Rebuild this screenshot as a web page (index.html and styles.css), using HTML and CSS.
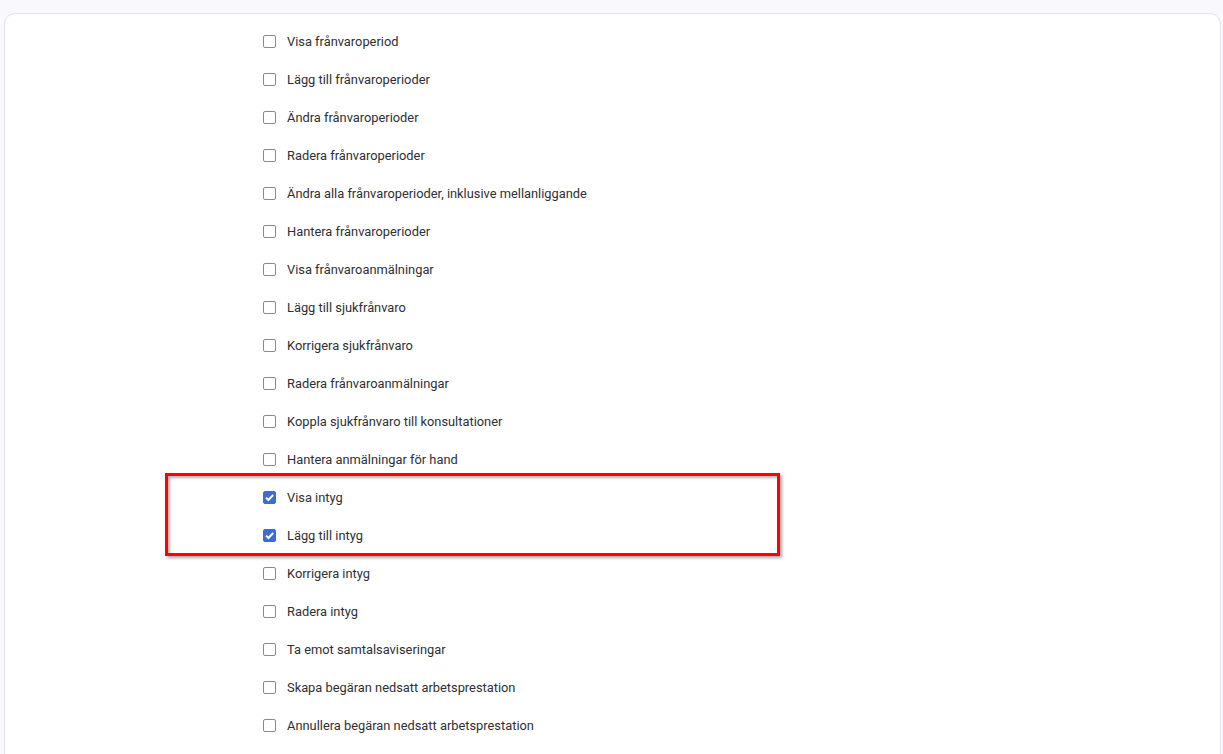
FILE: index.html
```html
<!DOCTYPE html>
<html lang="sv">
<head>
<meta charset="utf-8">
<title>Behörigheter</title>
<link rel="stylesheet" href="styles.css">
</head>
<body>
<div class="card">
  <ul class="perm-list">
    <li class="row"><span class="cb"></span><span class="label">Visa frånvaroperiod</span></li>
    <li class="row"><span class="cb"></span><span class="label">Lägg till frånvaroperioder</span></li>
    <li class="row"><span class="cb"></span><span class="label">Ändra frånvaroperioder</span></li>
    <li class="row"><span class="cb"></span><span class="label">Radera frånvaroperioder</span></li>
    <li class="row"><span class="cb"></span><span class="label">Ändra alla frånvaroperioder, inklusive mellanliggande</span></li>
    <li class="row"><span class="cb"></span><span class="label">Hantera frånvaroperioder</span></li>
    <li class="row"><span class="cb"></span><span class="label">Visa frånvaroanmälningar</span></li>
    <li class="row"><span class="cb"></span><span class="label">Lägg till sjukfrånvaro</span></li>
    <li class="row"><span class="cb"></span><span class="label">Korrigera sjukfrånvaro</span></li>
    <li class="row"><span class="cb"></span><span class="label">Radera frånvaroanmälningar</span></li>
    <li class="row"><span class="cb"></span><span class="label">Koppla sjukfrånvaro till konsultationer</span></li>
    <li class="row"><span class="cb"></span><span class="label">Hantera anmälningar för hand</span></li>
    <li class="highlight-group">
      <ul class="perm-list inner">
        <li class="row"><span class="cb checked"><svg viewBox="0 0 13 13" width="13" height="13"><path d="M3 6.6 L5.4 9 L10.2 4" fill="none" stroke="#fff" stroke-width="2"/></svg></span><span class="label">Visa intyg</span></li>
        <li class="row"><span class="cb checked"><svg viewBox="0 0 13 13" width="13" height="13"><path d="M3 6.6 L5.4 9 L10.2 4" fill="none" stroke="#fff" stroke-width="2"/></svg></span><span class="label">Lägg till intyg</span></li>
      </ul>
      <div class="highlight-box"></div>
    </li>
    <li class="row"><span class="cb"></span><span class="label">Korrigera intyg</span></li>
    <li class="row"><span class="cb"></span><span class="label">Radera intyg</span></li>
    <li class="row"><span class="cb"></span><span class="label">Ta emot samtalsaviseringar</span></li>
    <li class="row"><span class="cb"></span><span class="label">Skapa begäran nedsatt arbetsprestation</span></li>
    <li class="row"><span class="cb"></span><span class="label">Annullera begäran nedsatt arbetsprestation</span></li>
  </ul>
</div>
</body>
</html>
```
FILE: styles.css
```css
html, body {
  margin: 0;
  padding: 0;
}
body {
  background: #f9f8fc;
  font-family: Roboto, "Liberation Sans", Arial, sans-serif;
  color: #2e2e33;
  height: 754px;
  overflow: hidden;
}
.card {
  margin: 13px 2px 0 4px;
  background: #ffffff;
  border: 1px solid #e4e1ee;
  border-radius: 11px;
  padding: 8px 0 40px 258px;
}
.perm-list {
  list-style: none;
  margin: 0;
  padding: 0;
}
.row {
  box-sizing: border-box;
  height: 38px;
  padding-top: 1px;
  display: flex;
  align-items: center;
  gap: 11px;
}
.cb {
  box-sizing: border-box;
  width: 13px;
  height: 13px;
  border: 1px solid #8a8a8a;
  border-radius: 2px;
  background: #fff;
  flex: none;
  display: flex;
}
.cb.checked {
  background: #3e6ad8;
  border-color: #3e6ad8;
}
.cb.checked svg {
  margin: -1px;
}
.label {
  font-size: 12.85px;
  line-height: 15px;
}
.highlight-group {
  position: relative;
}
.highlight-box {
  position: absolute;
  left: -98px;
  top: -5px;
  width: 615px;
  height: 83px;
  box-sizing: border-box;
  border: 3px solid #ff0000;
  box-shadow: 2px 2px 3px rgba(0, 0, 0, 0.35), inset 2px 2px 3px rgba(0, 0, 0, 0.3);
  pointer-events: none;
}
```
